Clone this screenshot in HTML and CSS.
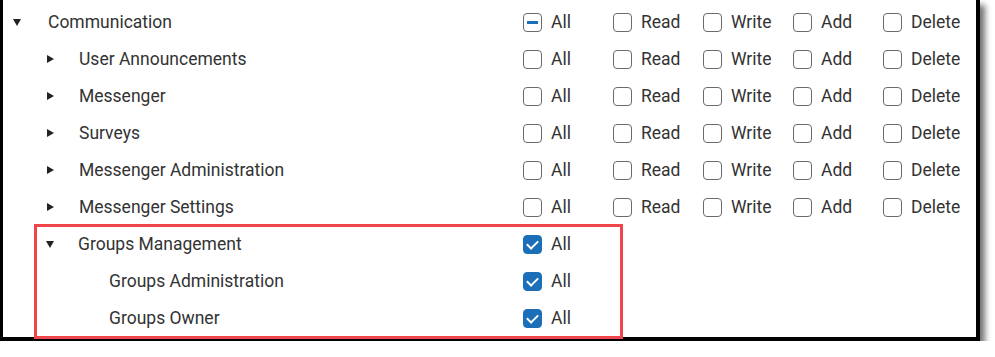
FILE: index.html
```html
<!DOCTYPE html>
<html lang="en">
<head>
  <meta charset="UTF-8" />
  <meta name="viewport" content="width=device-width, initial-scale=1.0"/>
  <title>Tool Rights - Communication</title>
  <link rel="stylesheet" href="styles.css">
</head>
<body>

  <div class="panel">
    <div class="row">
      <div class="name level-0"><span class="caret open"></span>Communication</div>
      <label class="perm"><span class="box partial"></span>All</label>
      <label class="perm"><span class="box"></span>Read</label>
      <label class="perm"><span class="box"></span>Write</label>
      <label class="perm"><span class="box"></span>Add</label>
      <label class="perm"><span class="box"></span>Delete</label>
    </div>

    <div class="row">
      <div class="name level-1"><span class="caret"></span>User Announcements</div>
      <label class="perm"><span class="box"></span>All</label>
      <label class="perm"><span class="box"></span>Read</label>
      <label class="perm"><span class="box"></span>Write</label>
      <label class="perm"><span class="box"></span>Add</label>
      <label class="perm"><span class="box"></span>Delete</label>
    </div>

    <div class="row">
      <div class="name level-1"><span class="caret"></span>Messenger</div>
      <label class="perm"><span class="box"></span>All</label>
      <label class="perm"><span class="box"></span>Read</label>
      <label class="perm"><span class="box"></span>Write</label>
      <label class="perm"><span class="box"></span>Add</label>
      <label class="perm"><span class="box"></span>Delete</label>
    </div>

    <div class="row">
      <div class="name level-1"><span class="caret"></span>Surveys</div>
      <label class="perm"><span class="box"></span>All</label>
      <label class="perm"><span class="box"></span>Read</label>
      <label class="perm"><span class="box"></span>Write</label>
      <label class="perm"><span class="box"></span>Add</label>
      <label class="perm"><span class="box"></span>Delete</label>
    </div>

    <div class="row">
      <div class="name level-1"><span class="caret"></span>Messenger Administration</div>
      <label class="perm"><span class="box"></span>All</label>
      <label class="perm"><span class="box"></span>Read</label>
      <label class="perm"><span class="box"></span>Write</label>
      <label class="perm"><span class="box"></span>Add</label>
      <label class="perm"><span class="box"></span>Delete</label>
    </div>

    <div class="row">
      <div class="name level-1"><span class="caret"></span>Messenger Settings</div>
      <label class="perm"><span class="box"></span>All</label>
      <label class="perm"><span class="box"></span>Read</label>
      <label class="perm"><span class="box"></span>Write</label>
      <label class="perm"><span class="box"></span>Add</label>
      <label class="perm"><span class="box"></span>Delete</label>
    </div>

    <div class="group highlight">
      <div class="row">
        <div class="name level-1"><span class="caret open"></span>Groups Management</div>
        <label class="perm"><span class="box checked"></span>All</label>
      </div>

      <div class="row">
        <div class="name level-2">Groups Administration</div>
        <label class="perm"><span class="box checked"></span>All</label>
      </div>

      <div class="row">
        <div class="name level-2">Groups Owner</div>
        <label class="perm"><span class="box checked"></span>All</label>
      </div>
    </div>
  </div>

</body>
</html>
```

FILE: styles.css
```css
* {
  box-sizing: border-box;
  margin: 0;
  padding: 0;
}

body {
  font-family: Roboto, 'Liberation Sans', Arial, sans-serif;
  background-color: #fff;
  color: #333;
  font-size: 17.5px;
}

.panel {
  width: 980px;
  padding: 3px 0 1px;
  background: #fff;
  border-left: 3px solid #000;
  border-right: 4px solid #000;
  border-bottom: 4px solid #000;
  box-shadow: 5px 5px 6px rgba(0, 0, 0, 0.55);
}

.row {
  display: grid;
  grid-template-columns: 520px repeat(5, 90px);
  align-items: center;
  height: 37px;
  padding-top: 1px;
}

.name {
  display: flex;
  align-items: center;
  white-space: nowrap;
}

.name.level-0 {
  padding-left: 46px;
}

.name.level-1 {
  padding-left: 76px;
}

.name.level-2 {
  padding-left: 106px;
}

/* carets sit in the indent to the left of the label */
.caret {
  width: 0;
  height: 0;
  margin-left: -32px;
  margin-right: 25px;
  border-style: solid;
  border-color: transparent transparent transparent #222;
  border-width: 4.5px 0 4.5px 7px;
}

.caret.open {
  margin-left: -36px;
  margin-right: 27px;
  border-color: #222 transparent transparent transparent;
  border-width: 7px 4.5px 0 4.5px;
}

.level-1 .caret.open {
  margin-left: -33px;
  margin-right: 24px;
}

.perm {
  display: flex;
  align-items: center;
  gap: 9px;
}

.box {
  width: 19px;
  height: 19px;
  border: 1px solid #6b6b6b;
  border-radius: 4px;
  background: #fff;
  position: relative;
}

.box.partial::after {
  content: '';
  position: absolute;
  left: 3px;
  right: 3px;
  top: 7px;
  height: 3px;
  background: #1b6fb8;
}

.box.checked {
  background: #1b6fb8;
  border-color: #1b6fb8;
}

.box.checked::after {
  content: '';
  position: absolute;
  left: 5px;
  top: 2px;
  width: 5px;
  height: 9px;
  border: solid #fff;
  border-width: 0 2.5px 2.5px 0;
  transform: rotate(45deg);
}

.group {
  position: relative;
}

.highlight::after {
  content: '';
  position: absolute;
  left: 31px;
  top: -1px;
  width: 583px;
  height: 109px;
  border: 3px solid #f0464b;
  pointer-events: none;
}
```
